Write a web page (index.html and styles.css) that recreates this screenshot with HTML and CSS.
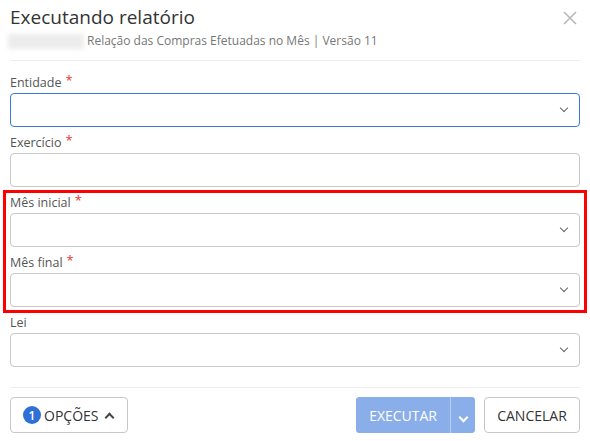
FILE: index.html
```html
<!DOCTYPE html>
<html>
<head>
  <meta charset="UTF-8">
  <link rel="stylesheet" href="styles.css">
</head>
<body>
  <div class="modal">
    <!-- Cabeçalho -->
    <div class="modal-header">
      <div class="modal-titles">
        <h2 class="modal-title">Executando relatório</h2>
        <div class="modal-subtitle">
          <span class="blurred-code"></span>
          <span>Relação das Compras Efetuadas no Mês | Versão 11</span>
        </div>
      </div>
      <svg class="modal-close" width="14" height="14" viewBox="0 0 14 14">
        <path d="M1 1 L13 13 M13 1 L1 13" stroke="#b8b8b8" stroke-width="1.6" fill="none"/>
      </svg>
    </div>

    <!-- Campos -->
    <div class="modal-body">
      <div class="field">
        <label>Entidade<span class="req">*</span></label>
        <div class="select focused"><span class="chevron"></span></div>
      </div>
      <div class="field">
        <label>Exercício<span class="req">*</span></label>
        <div class="select"></div>
      </div>
      <div class="field">
        <label>Mês inicial<span class="req">*</span></label>
        <div class="select"><span class="chevron"></span></div>
      </div>
      <div class="field">
        <label>Mês final<span class="req">*</span></label>
        <div class="select"><span class="chevron"></span></div>
      </div>
      <div class="field">
        <label>Lei</label>
        <div class="select"><span class="chevron"></span></div>
      </div>
      <div class="highlight-box"></div>
    </div>

    <!-- Rodapé -->
    <div class="modal-footer">
      <button class="btn btn-options"><span class="badge">1</span>OPÇÕES <span class="chevron-up"></span></button>
      <div class="footer-right">
        <div class="btn-split">
          <button class="btn-primary">EXECUTAR</button>
          <button class="btn-primary btn-caret"><span class="chevron white"></span></button>
        </div>
        <button class="btn btn-cancel">CANCELAR</button>
      </div>
    </div>
  </div>
</body>
</html>
```

FILE: styles.css
```css
body {
  margin: 0;
  width: 590px;
  height: 441px;
  background: #fff;
  font-family: "Open Sans", Arial, sans-serif;
  color: #333;
  overflow: hidden;
}
.modal {
  padding: 0 10px;
}
.modal-header {
  display: flex;
  justify-content: space-between;
  align-items: flex-start;
  height: 61px;
  border-bottom: 1px solid #eee;
  box-sizing: border-box;
}
.modal-title {
  margin: 4px 0 0 0;
  font-size: 19px;
  font-weight: 400;
  line-height: 26px;
  color: #333;
}
.modal-subtitle {
  display: flex;
  align-items: center;
  margin-top: 1px;
  font-size: 12px;
  color: #777;
  line-height: 20px;
}
.blurred-code {
  display: inline-block;
  width: 76px;
  height: 15px;
  margin: 0 3px 0 -2px;
  background: #ececec;
  filter: blur(2.5px);
}
.modal-close {
  margin: 11px 3px 0 0;
}
.modal-body {
  position: relative;
  padding-top: 12px;
}
.field {
  margin-bottom: 6px;
}
.field label {
  display: block;
  height: 20px;
  font-size: 12.5px;
  line-height: 20px;
  color: #555;
}
.req {
  display: inline-block;
  color: #e53935;
  font-size: 13px;
  vertical-align: top;
  line-height: 14px;
  margin-left: 4px;
}
.select {
  position: relative;
  height: 34px;
  border: 1px solid #c8c8c8;
  border-radius: 4px;
  box-sizing: border-box;
  background: #fff;
}
.select.focused {
  border-color: #3b78d8;
}
.chevron {
  position: absolute;
  right: 12px;
  top: 11px;
  width: 5px;
  height: 5px;
  border-right: 1.3px solid #666;
  border-bottom: 1.3px solid #666;
  transform: rotate(45deg);
}
.chevron.white {
  position: static;
  display: inline-block;
  border-color: #fff;
  border-width: 2px;
  margin-top: -4px;
}
.highlight-box {
  position: absolute;
  left: -7px;
  top: 129px;
  width: 584px;
  height: 123px;
  border: 3px solid #f00;
  box-sizing: border-box;
}
.modal-footer {
  display: flex;
  justify-content: space-between;
  align-items: center;
  margin-top: 20px;
  padding-top: 9px;
  border-top: 1px solid #eee;
}
.btn {
  height: 36px;
  padding: 0 11px;
  border: 1px solid #c8c8c8;
  border-radius: 4px;
  background: #fff;
  font-family: "Open Sans", Arial, sans-serif;
  font-size: 14px;
  color: #333;
  display: flex;
  align-items: center;
}
.btn-options {
  width: 118px;
  padding-left: 12px;
}
.badge {
  display: inline-flex;
  justify-content: center;
  align-items: center;
  width: 18px;
  height: 18px;
  border-radius: 50%;
  background: #2f6fd6;
  color: #fff;
  font-size: 12px;
  font-weight: 600;
  margin-right: 3px;
}
.chevron-up {
  display: inline-block;
  width: 5px;
  height: 5px;
  margin-left: 8px;
  margin-top: 4px;
  border-left: 2px solid #444;
  border-top: 2px solid #444;
  transform: rotate(45deg);
}
.footer-right {
  display: flex;
  gap: 9px;
}
.btn-split {
  display: flex;
  height: 36px;
  border-radius: 4px;
  overflow: hidden;
  background: #8aaee9;
}
.btn-primary {
  border: none;
  background: #8aaee9;
  color: #fff;
  font-family: "Open Sans", Arial, sans-serif;
  font-size: 14px;
  padding: 0 13px;
  height: 36px;
}
.btn-caret {
  width: 25px;
  padding: 0;
  border-left: 1px solid #b8cdf1;
}
.btn-cancel {
  width: 96px;
  justify-content: center;
}
```
